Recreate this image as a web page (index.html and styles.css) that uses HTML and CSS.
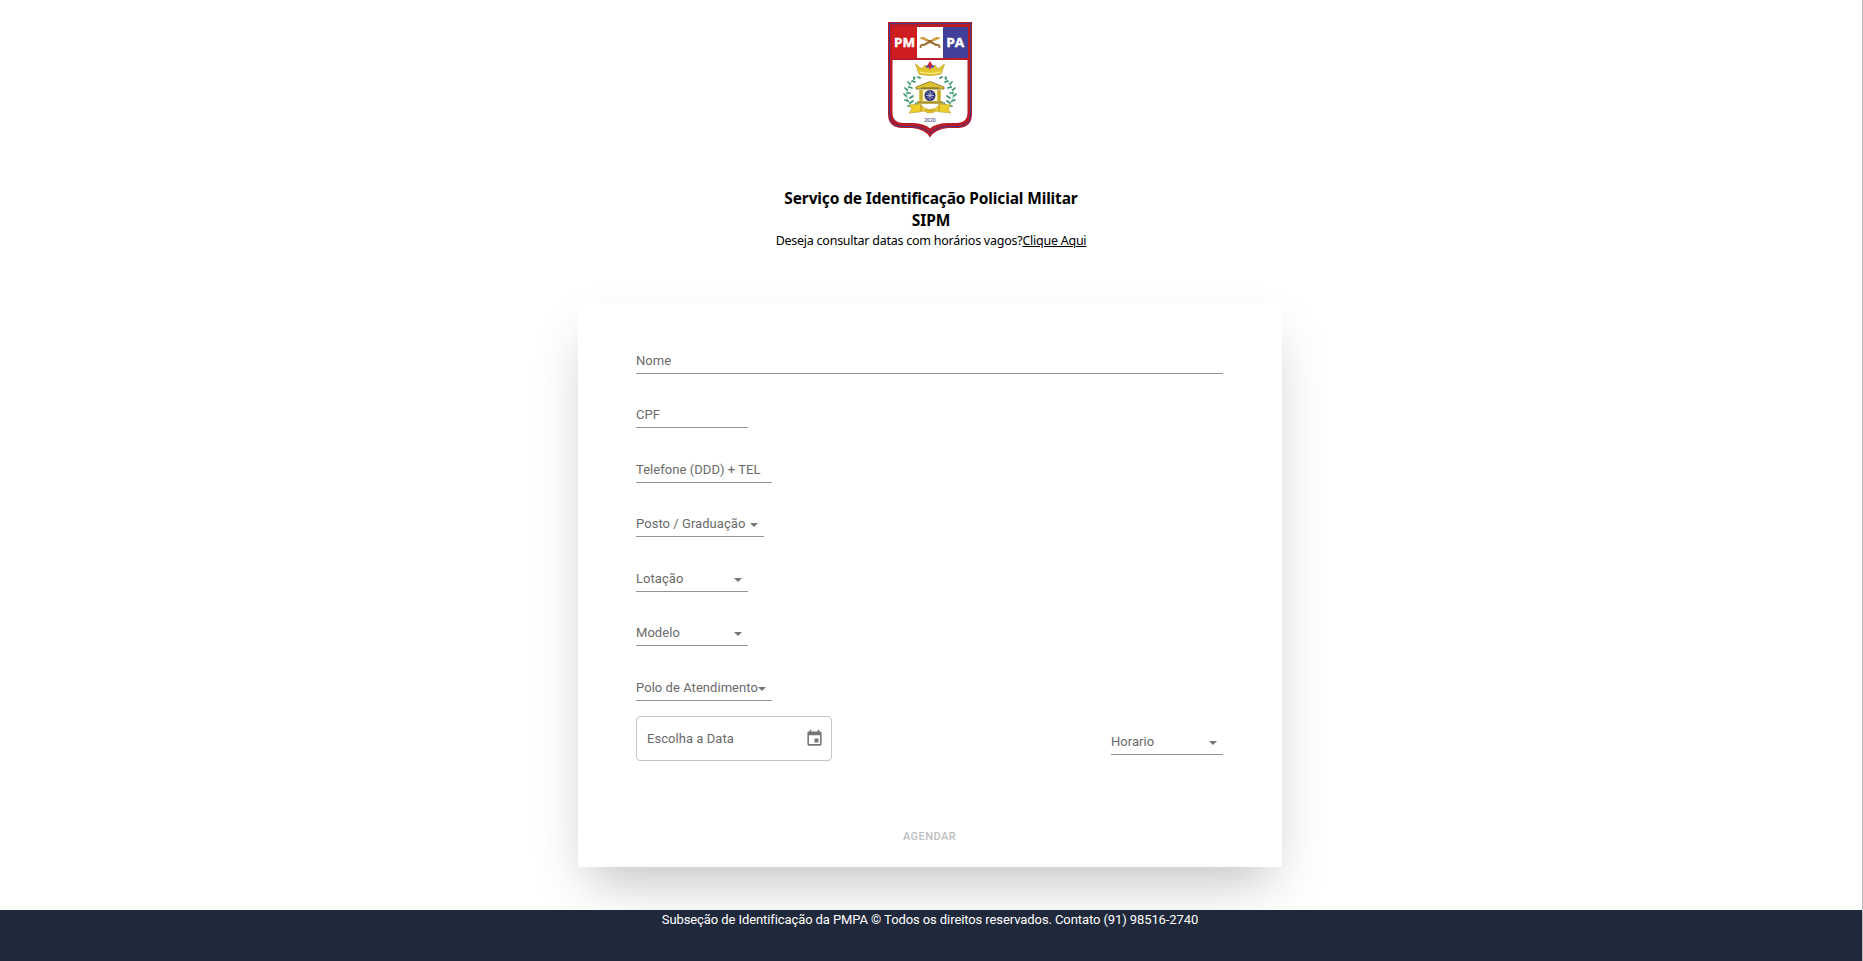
FILE: index.html
```
<!DOCTYPE html>
<html lang="pt-BR">
<head>
<meta charset="utf-8">
<title>SIPM</title>
<link rel="stylesheet" href="styles.css">
</head>
<body>
<div class="page">
  <header class="header">
    <svg class="crest" viewBox="0 0 84 116" role="img" aria-label="PMPA">
      <path d="M0 0H84V92Q84 105 71 106H60Q47 107 42 115.500Q37 107 24 106H13Q0 105 0 92Z" fill="#b81c28"/>
      <path d="M1.500 1.500H82.500V92Q82.500 103.500 71 104.500H60Q47 105 42 111.500Q37 105 24 104.500H13Q1.500 103.500 1.500 92Z" fill="none" stroke="#4a3580" stroke-width="1"/>
      <path d="M4.500 38H79.500V91Q79.500 100 70 101H59Q47 101.500 42 106.500Q37 101.500 25 101H14Q4.500 100 4.500 91Z" fill="#fff"/>
      <path d="M4 5H29V36H4Z" fill="#cf1c20"/><path d="M29 5H55V36H29Z" fill="#fff"/><path d="M55 5H80V36H55Z" fill="#413f98"/>
      <text class="crest-letters" x="16.500" y="24.700" textLength="21" lengthAdjust="spacingAndGlyphs">PM</text>
      <text class="crest-letters" x="67.300" y="24.700" textLength="18" lengthAdjust="spacingAndGlyphs">PA</text>
      <g fill="none" stroke="#9b6a28" stroke-width="2" stroke-linecap="round"><path d="M35 16L48 23Q51 22 51.500 25M49 16L36 23Q33 22 32.500 25"/><path d="M33 16L39 18M51 16L45 18" stroke="#d8a646"/></g>
      <path d="M27.500 42L34 47L37 43L42 48L47 43L50 47L56.500 42L53 52Q42 55 31 52Z" fill="#e3c52c" stroke="#b89a24" stroke-width=".7"/>
      <path d="M31.500 50Q42 53 52.500 50" fill="none" stroke="#fff08a" stroke-width="1.200"/>
      <path d="M42 39L44.500 43L42 48L39.500 43Z" fill="#d32331"/><path d="M38 44.500H41M46 44.500H43" stroke="#343f94" stroke-width="2" fill="none"/>
      <g fill="none" stroke="#5aa884" stroke-width=".7"><path d="M28 55Q17 66 19 76Q21 84 28 90M56 55Q67 66 65 76Q63 84 56 90"/></g>
      <g fill="none" stroke="#369468" stroke-width="1.700" stroke-linecap="round"><path d="M30 55l2 1M26 55l0 2M24 59l3 1M22 62l-2-2M21 65l3 1M19 68l-2-2M19 71l3 0M18 74l-2-2M22 76l3-2M20 79l-3-1M22 81l3-2M24 84l-4 0M27 84l1-3M27 88l-3 0M54 55l-2 1M58 55l0 2M60 59l-3 1M62 62l2-2M63 65l-3 1M65 68l2-2M65 71l-3 0M66 74l2-2M62 76l-3-2M64 79l3-1M62 81l-3-2M60 84l4 0M57 84l-1-3M57 88l3 0"/></g>
      <path d="M28 65L42 59.500L56 65V67H28Z" fill="#dcc22f" stroke="#7d7022" stroke-width=".8"/>
      <path d="M31 68H53V79H31Z" fill="#fff8c8"/><path d="M33 68V79M51 68V79" stroke="#c7ad2a" stroke-width="3.500"/><path d="M29 80.500H55" stroke="#a89025" stroke-width="2.500"/>
      <path d="M33 66H51" stroke="#6b6022"/>
      <circle cx="42" cy="73.500" r="5.500" fill="#30357a"/><path d="M42 69V78M38 73.500H46M39 70.500L45 76.500M45 70.500L39 76.500" stroke="#c5cce4" stroke-width=".8"/>
      <path d="M21 83L32 82L36 86Q42 89 48 86L52 82L63 83L60 87L63 91L53 90L48 89Q42 93 36 89L31 90L21 91L24 87Z" fill="#edce2c" stroke="#b99b28" stroke-width=".6"/>
      <path d="M33 82V89M51 82V89M37 88Q42 90 47 88" fill="none" stroke="#a88a20" stroke-width=".8"/>
      <text class="crest-year" x="42" y="100" textLength="11.500" lengthAdjust="spacingAndGlyphs">2020</text>
    </svg>
    <h1 class="title">Serviço de Identificação Policial Militar</h1>
    <h2 class="title short">SIPM</h2>
    <p class="consult">Deseja consultar datas com horários vagos?<a class="consult-link" href="#">Clique Aqui</a></p>
  </header>
  <main class="card">
    <div class="field full"><span>Nome</span></div>
    <div class="field"><span>CPF</span></div>
    <div class="field wide"><span>Telefone (DDD) + TEL</span></div>
    <div class="field medium select"><span>Posto / Graduação</span><i class="arrow"></i></div>
    <div class="field select"><span>Lotação</span><i class="arrow"></i></div>
    <div class="field select"><span>Modelo</span><i class="arrow"></i></div>
    <div class="field wide select"><span>Polo de Atendimento</span><i class="arrow"></i></div>
    <div class="schedule">
      <div class="date"><span>Escolha a Data</span>
        <svg class="calendar" viewBox="0 0 24 24"><path fill="currentColor" d="M17 12h-5v5h5v-5zM16 1v2H8V1H6v2H5c-1.110 0-1.990.9-1.990 2L3 19c0 1.100.89 2 2 2h14c1.100 0 2-.9 2-2V5c0-1.100-.9-2-2-2h-1V1h-2zm3 18H5V8h14v11z"/></svg>
      </div>
      <div class="field select"><span>Horario</span><i class="arrow"></i></div>
    </div>
    <button class="submit" disabled>AGENDAR</button>
  </main>
  <footer class="footer">Subseção de Identificação da PMPA © Todos os direitos reservados. Contato (91) 98516-2740</footer>
</div>
</body>
</html>
```
FILE: styles.css
```
* { box-sizing: border-box; }
body { margin: 0; background: #fff; font-family: Roboto, sans-serif; overflow: hidden; }
.page { height: 961px; display: flex; flex-direction: column; align-items: center; border-right: 1px solid #bcbcbc; }
.header { height: 304px; padding-top: 22px; display: flex; flex-direction: column; align-items: center; font-family: "Noto Sans", sans-serif; color: #000; flex: none; }
.crest { width: 84px; height: 116px; margin-right: 2px; }
.crest-letters { font: 700 13px "Open Sans", sans-serif; fill: #fff; stroke: #fff; stroke-width: .4px; text-anchor: middle; }
.crest-year { font: 600 4.5px "Open Sans", sans-serif; fill: #55558c; text-anchor: middle; }
.title { margin: 49px 0 0; font-size: 15.5px; line-height: 22px; font-weight: 700; white-space: nowrap; letter-spacing: -.14px; }
.title.short { margin: 0; }
.consult { margin: 0; font-size: 12.5px; line-height: 20px; letter-spacing: -.25px; white-space: nowrap; }
.consult-link { color: #000; text-decoration: underline; }
.card { width: 704px; height: 563px; margin-right: 2px; padding: 15.45px 59px 0 58px; border-radius: 4px; background: #fff; box-shadow: 0 25px 50px -12px rgba(0, 0, 0, .25); display: flex; flex-direction: column; flex: none; }
.field { width: 112px; height: 54.5px; flex: none; display: flex; align-items: flex-end; justify-content: space-between; padding-bottom: 5.3px; border-bottom: 1px solid #949494; color: #6a6a6a; font-size: 13px; line-height: 15px; letter-spacing: .05px; white-space: nowrap; }
.field.full { width: 587px; }
.field.wide { width: 136px; }
.field.medium { width: 128px; }
.arrow { width: 0; height: 0; margin: 0 6px 4px 0; border: 4px solid transparent; border-top-color: #757575; border-bottom: 0; }
.wide .arrow { margin-left: -2px; }
.schedule { display: flex; justify-content: space-between; align-items: flex-start; padding-top: 15px; }
.schedule .field { height: 39px; padding-bottom: 5px; }
.date { width: 196px; height: 45px; padding: 0 7px 0 10px; border: 1px solid #c4c4c4; border-radius: 4px; display: flex; align-items: center; justify-content: space-between; font-size: 13px; letter-spacing: .05px; color: #6a6a6a; }
.calendar { width: 19px; height: 19px; color: #757575; }
.submit { align-self: center; margin: 69px 0 0; padding: 0; border: 0; background: none; font: 500 11px/14px Roboto, sans-serif; letter-spacing: .45px; color: #bdbdbd; }
.footer { width: 100%; height: 51px; margin-top: auto; padding-right: 2px; background: #20293c; color: #fff; text-align: center; font-size: 13px; line-height: 19px; letter-spacing: -.09px; position: relative; }
```
